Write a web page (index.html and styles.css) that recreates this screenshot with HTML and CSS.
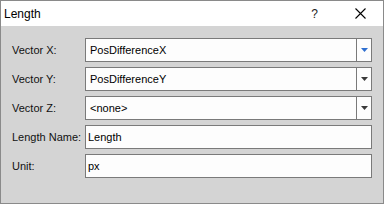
FILE: index.html
```html
<!DOCTYPE html>
<html lang="en">

<head>
  <meta charset="UTF-8" />
  <title>Length</title>
  <link rel="stylesheet" href="styles.css">
</head>

<body>
  <div class="window">
    <div class="titlebar">
      <span class="title">Length</span>
      <span class="help">?</span>
      <span class="close">
        <svg width="11" height="11" viewBox="0 0 11 11">
          <path d="M0.5 0.5 L10.5 10.5 M10.5 0.5 L0.5 10.5" stroke="#000" stroke-width="1.1" fill="none" />
        </svg>
      </span>
    </div>

    <div class="content">
      <label>Vector X:</label>
      <div class="field combo">
        <span class="value">PosDifferenceX</span>
        <span class="drop">
          <svg width="7" height="4" viewBox="0 0 7 4"><polygon points="0,0 7,0 3.5,4" fill="#2f6fd0" /></svg>
        </span>
      </div>

      <label>Vector Y:</label>
      <div class="field combo">
        <span class="value">PosDifferenceY</span>
        <span class="drop">
          <svg width="7" height="4" viewBox="0 0 7 4"><polygon points="0,0 7,0 3.5,4" fill="#3a3a3a" /></svg>
        </span>
      </div>

      <label>Vector Z:</label>
      <div class="field combo">
        <span class="value">&lt;none&gt;</span>
        <span class="drop">
          <svg width="7" height="4" viewBox="0 0 7 4"><polygon points="0,0 7,0 3.5,4" fill="#3a3a3a" /></svg>
        </span>
      </div>

      <label>Length Name:</label>
      <div class="field edit">Length</div>

      <label>Unit:</label>
      <div class="field edit">px</div>
    </div>
  </div>
</body>

</html>
```

FILE: styles.css
```css
* {
  box-sizing: border-box;
  margin: 0;
  padding: 0;
}

body {
  font-family: 'Liberation Sans', Arial, sans-serif;
  font-size: 11px;
  color: #000;
  background: #d4d4d4;
}

.window {
  width: 384px;
  height: 204px;
  border: 1px solid #8a8a8a;
  background: #d4d4d4;
  display: flex;
  flex-direction: column;
}

.titlebar {
  height: 25px;
  background: #fff;
  display: flex;
  align-items: center;
  font-size: 12px;
}

.titlebar .title {
  padding-left: 3px;
}

.titlebar .help {
  margin-left: auto;
  color: #222;
  font-size: 12px;
}

.titlebar .close {
  display: flex;
  margin-left: 37px;
  margin-right: 17px;
}

.content {
  padding: 12px 11px 0 11px;
  display: grid;
  grid-template-columns: 73px 1fr;
  grid-auto-rows: 24px;
  row-gap: 5px;
}

.content label {
  display: flex;
  align-items: center;
  color: #111;
}

.field {
  border: 1px solid #7a7a7a;
  background: #fdfdfd;
  display: flex;
  align-items: center;
}

.combo .value {
  flex: 1;
  padding-left: 4px;
}

.combo .drop {
  width: 15px;
  height: 100%;
  border-left: 1px solid #7a7a7a;
  display: flex;
  align-items: center;
  justify-content: center;
}

.edit {
  padding-left: 2px;
}
```
